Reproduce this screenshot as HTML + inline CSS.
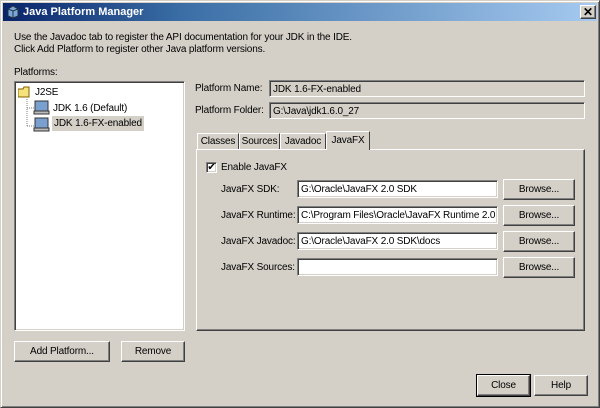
<!DOCTYPE html>
<html><head><style>
*{box-sizing:border-box;margin:0;padding:0}
body{width:600px;height:408px;background:#d4d0c8;font:10px "Liberation Sans",sans-serif;letter-spacing:-0.15px;color:#000;position:relative;overflow:hidden}
.a{position:absolute;white-space:nowrap}
.win{position:absolute;left:0;top:0;width:600px;height:408px;border:1px solid;border-color:#d4d0c8 #404040 #404040 #d4d0c8;box-shadow:inset 1px 1px 0 #fff,inset -1px -1px 0 #808080}
.title{position:absolute;left:3px;top:3px;width:594px;height:18px;background:linear-gradient(to right,#0a246a,#3a6ea5 30%,#a6caf0);color:#fff;font-weight:bold;font-size:11px;letter-spacing:0;line-height:18px;padding-left:20px}
.fld{position:absolute;background:#fff;border:1px solid;border-color:#808080 #fff #fff #808080;box-shadow:inset 1px 1px 0 #404040,inset -1px -1px 0 #d4d0c8;padding:2px 0 0 3px;line-height:13px;white-space:nowrap;overflow:hidden}
.ro{background:#d4d0c8}
.btn{position:absolute;border:1px solid;border-color:#fff #404040 #404040 #fff;box-shadow:inset -1px -1px 0 #808080;text-align:center;line-height:17px}
.tab{position:absolute;top:133px;height:17px;border:1px solid;border-color:#fff #404040 transparent #fff;border-bottom:none;line-height:15px;text-align:center}
</style></head><body>
<div class="win"></div>
<div class="title">Java Platform Manager
<svg style="position:absolute;left:3px;top:2px" width="14" height="14"><path d="M2 4L7 1L12 4V11L7 13L2 11Z" fill="#7aa7d8" stroke="#234" stroke-width="1"/><path d="M7 6V13M2 4L7 6L12 4" stroke="#234" fill="none"/></svg>
<div class="btn" style="left:577px;top:2px;width:16px;height:14px;background:#d4d0c8;color:#000;line-height:12px;font-size:12px;padding:0">✕</div></div>
<div class="a" style="left:14px;top:32px">Use the Javadoc tab to register the API documentation for your JDK in the IDE.</div>
<div class="a" style="left:14px;top:44px">Click Add Platform to register other Java platform versions.</div>
<div class="a" style="left:14px;top:67px">Platforms:</div>
<div class="fld" style="left:14px;top:81px;width:171px;height:250px;padding:0">
<svg class="a" style="left:3px;top:3px" width="60" height="50"><path d="M9 14V41M9 23H17M9 41H17" stroke="#808080" stroke-dasharray="1 1"/><path d="M0 4H5L6 2H11V12H0Z" fill="#f6e27a" stroke="#806000"/><rect x="17" y="16" width="13" height="10" fill="#7aa0d0" stroke="#333"/><rect x="16" y="26" width="15" height="3" fill="#bbb" stroke="#333"/><rect x="17" y="33" width="13" height="10" fill="#7aa0d0" stroke="#333"/><rect x="16" y="43" width="15" height="3" fill="#bbb" stroke="#333"/></svg>
<div class="a" style="left:20px;top:4px">J2SE</div>
<div class="a" style="left:38px;top:20px">JDK 1.6 (Default)</div>
<div class="a" style="left:37px;top:34px;background:#d4d0c8;padding:1px 2px">JDK 1.6-FX-enabled</div>
</div>
<div class="a" style="left:195px;top:83px">Platform Name:</div>
<div class="fld ro" style="left:269px;top:80px;width:316px;height:17px">JDK 1.6-FX-enabled</div>
<div class="a" style="left:195px;top:105px">Platform Folder:</div>
<div class="fld ro" style="left:269px;top:102px;width:316px;height:17px">G:\Java\jdk1.6.0_27</div>
<div class="tab" style="left:197px;width:42px">Classes</div>
<div class="tab" style="left:239px;width:41px">Sources</div>
<div class="tab" style="left:280px;width:46px">Javadoc</div>
<div style="position:absolute;left:196px;top:149px;width:389px;height:182px;border:1px solid;border-color:#fff #404040 #404040 #fff;box-shadow:inset -1px -1px 0 #808080"></div>
<div class="tab" style="left:326px;top:131px;width:44px;height:19px;background:#d4d0c8;z-index:2;padding-top:1px">JavaFX</div>
<div class="fld" style="left:206px;top:162px;width:11px;height:11px;padding:0;font-size:10px;line-height:9px;text-align:center">✔</div>
<div class="a" style="left:221px;top:162px">Enable JavaFX</div>
<div class="a" style="left:221px;top:184px">JavaFX SDK:</div>
<div class="a" style="left:221px;top:210px">JavaFX Runtime:</div>
<div class="a" style="left:221px;top:236px">JavaFX Javadoc:</div>
<div class="a" style="left:221px;top:262px">JavaFX Sources:</div>
<div class="fld" style="left:297px;top:180px;width:201px;height:18px">G:\Oracle\JavaFX 2.0 SDK</div>
<div class="fld" style="left:297px;top:206px;width:201px;height:18px">C:\Program Files\Oracle\JavaFX Runtime 2.0</div>
<div class="fld" style="left:297px;top:232px;width:201px;height:18px">G:\Oracle\JavaFX 2.0 SDK\docs</div>
<div class="fld" style="left:297px;top:258px;width:201px;height:18px"></div>
<div class="btn" style="left:503px;top:179px;width:72px;height:21px;line-height:19px">Browse...</div>
<div class="btn" style="left:503px;top:205px;width:72px;height:21px;line-height:19px">Browse...</div>
<div class="btn" style="left:503px;top:231px;width:72px;height:21px;line-height:19px">Browse...</div>
<div class="btn" style="left:503px;top:257px;width:72px;height:21px;line-height:19px">Browse...</div>
<div class="btn" style="left:14px;top:341px;width:96px;height:21px;line-height:19px">Add Platform...</div>
<div class="btn" style="left:121px;top:341px;width:64px;height:21px;line-height:19px">Remove</div>
<div class="btn" style="left:477px;top:375px;width:53px;height:21px;line-height:19px;outline:1px solid #000">Close</div>
<div class="btn" style="left:534px;top:375px;width:54px;height:21px;line-height:19px">Help</div>
</body></html>
